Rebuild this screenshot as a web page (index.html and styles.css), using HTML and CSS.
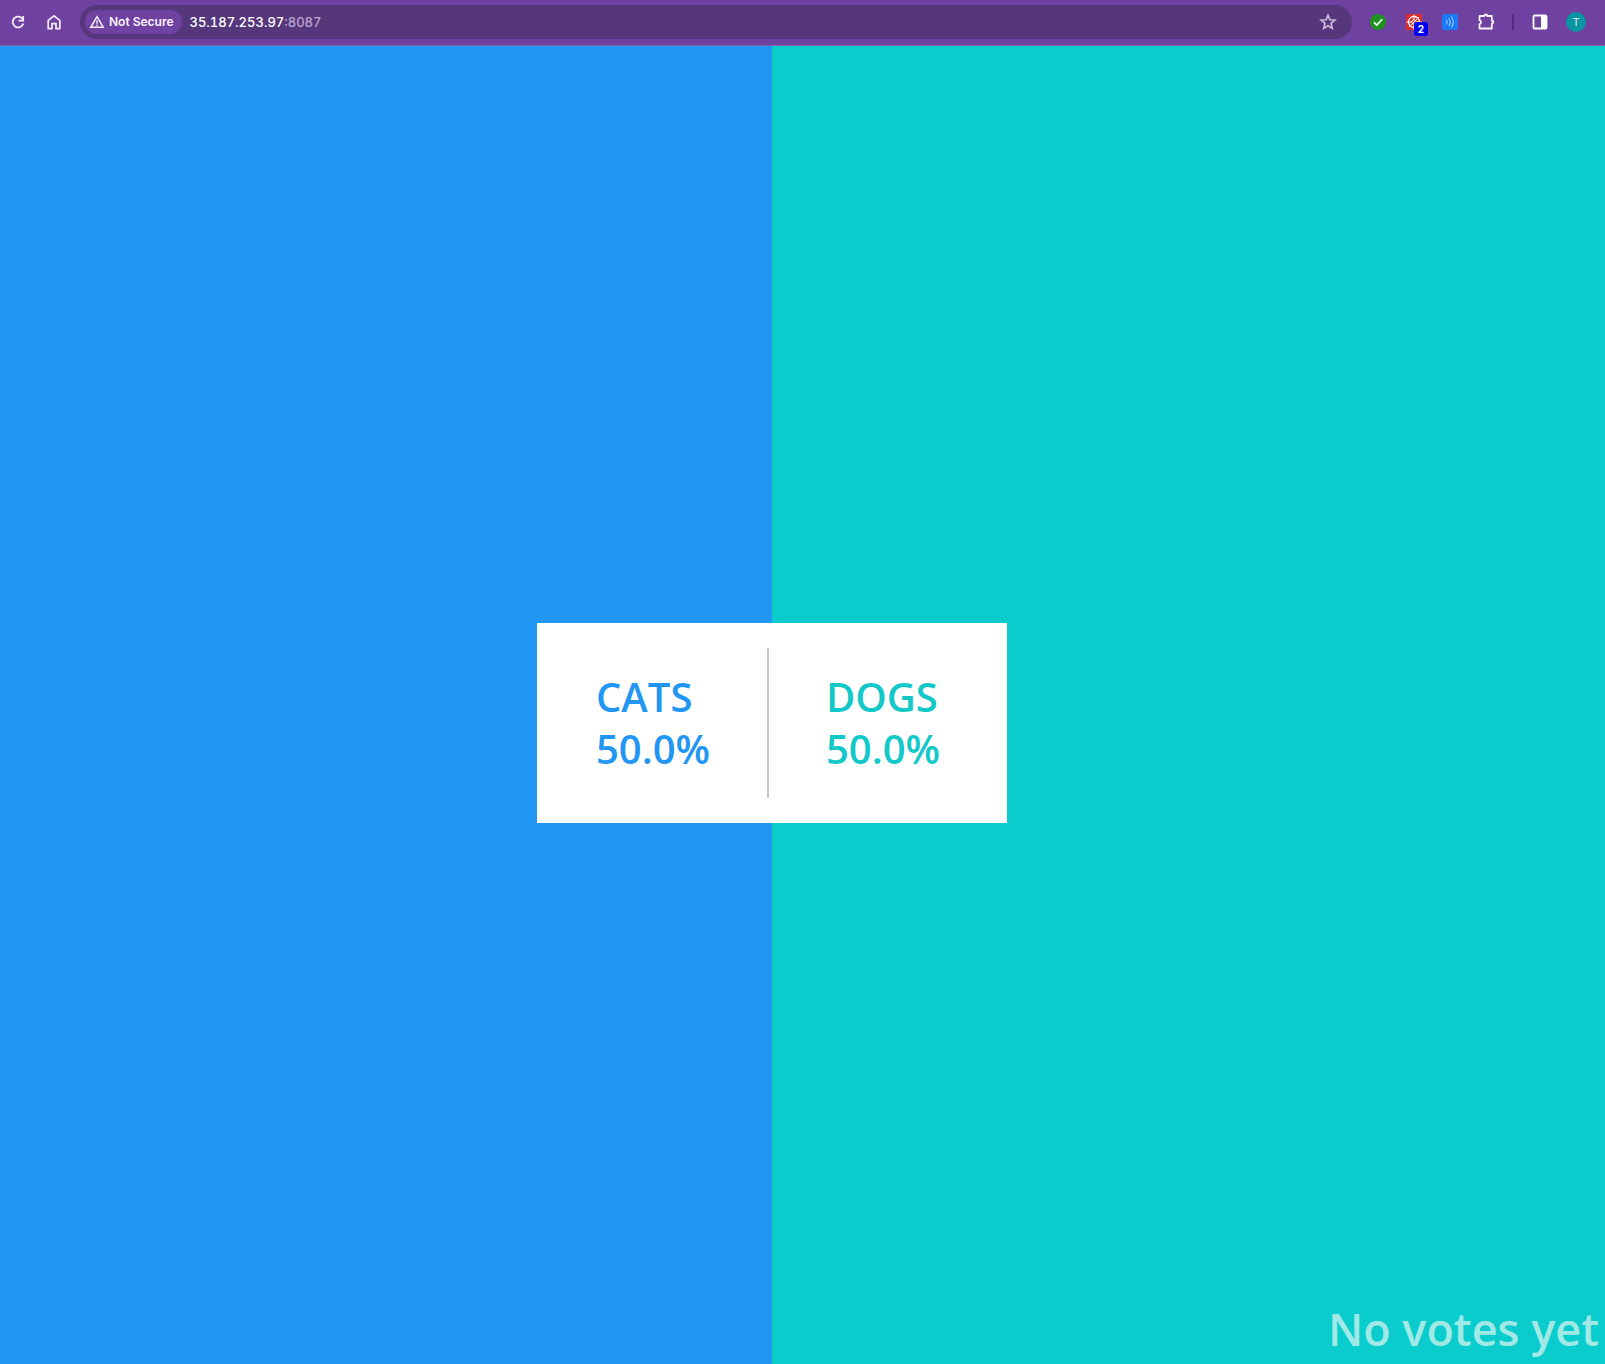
FILE: index.html
```html
<!DOCTYPE html>
<html lang="en">
<head>
<meta charset="utf-8">
<meta name="viewport" content="width=device-width, initial-scale=1">
<title>Cats vs Dogs -- Result</title>
<link rel="stylesheet" href="styles.css">
</head>
<body>
<header class="toolbar">
  <button class="tool" type="button" aria-label="Reload">
    <svg width="18" height="18" viewBox="0 0 18 18" fill="none" stroke="#f6effb" stroke-width="1.800"><path d="M13.8 6.4A5.4 5.4 0 1 0 14.3 10.4"/><path d="M14.2 3v4.6H9.6" /></svg>
  </button>
  <button class="tool" type="button" aria-label="Home">
    <svg width="18" height="18" viewBox="0 0 18 18" fill="none" stroke="#f6effb" stroke-width="1.700"><path d="M3.200 7.3 9 2.8l5.800 4.5v8.300H11v-5H7v5H3.200z"/></svg>
  </button>
  <div class="omnibox">
    <button class="chip" type="button">
      <svg width="16" height="16" viewBox="0 0 16 16" fill="none" stroke="#f6effb"><path d="M8 2.700 14.200 13.300H1.800z" stroke-width="1.500"/><path d="M8 6.200v3.500M8 10.500v1.500" stroke-width="1.400"/></svg>
      <span>Not Secure</span>
    </button>
    <a class="url" href="#"><span class="host">35.187.253.97</span>:8087</a>
    <button class="star" type="button" aria-label="Bookmark this page">
      <svg width="18" height="18" viewBox="0 0 18 18" fill="none" stroke="#c9b8da" stroke-width="1.700"><path d="m9 2.300 1.900 4.500 4.900.4-3.700 3.200 1.100 4.800L9 12.700l-4.200 2.500 1.100-4.800-3.700-3.200 4.900-.4z"/></svg>
    </button>
  </div>
  <div class="extensions">
    <button class="tool" type="button" aria-label="Status checker">
      <svg width="18" height="18" viewBox="0 0 18 18"><circle cx="9" cy="9" r="8" fill="#219321"/><path d="m5 9.300 2.800 2.700 5.400-5.700" fill="none" stroke="#fff" stroke-width="1.600"/></svg>
    </button>
    <button class="tool" type="button" aria-label="Blocker, 2 items">
      <svg width="18" height="18" viewBox="0 0 18 18" fill="none" stroke="#fff"><path d="M1 1h16v16H1z" fill="#e02b2b" stroke="none"/><circle cx="9" cy="9" r="5.500" stroke-width="1.300"/><circle cx="9" cy="9" r="2.200"/><path d="M9 1.500v5M9 11.500v5M1.500 9h5M11.500 9h5M4 14 14 4"/></svg>
      <span class="badge">2</span>
    </button>
    <button class="tool" type="button" aria-label="Read aloud">
      <svg width="18" height="18" viewBox="0 0 18 18" fill="none" stroke="#9ccaff" stroke-width="1.100" stroke-linecap="round"><rect x="1" y="1" width="16" height="16" rx="2" fill="#1b7af8" stroke="none"/><path d="M5.500 7q1.400 2 0 4M8 5.500q2.600 3.500 0 7M10.500 4q3.800 5 0 10"/></svg>
    </button>
    <button class="tool" type="button" aria-label="Extensions">
      <svg width="18" height="18" viewBox="0 0 18 18" fill="none" stroke="#fbf3ff" stroke-width="1.800" stroke-linejoin="round"><path d="M2.500 3h4.800a1.500 1.500 0 0 1 3 0h4.500v4.500a1.500 1.500 0 0 1 0 3v5H2.500v-4.300a2 2 0 0 0 0-3.900z"/></svg>
    </button>
    <span class="separator"></span>
    <button class="tool" type="button" aria-label="Side panel">
      <svg width="18" height="18" viewBox="0 0 18 18"><rect x="2.500" y="2.500" width="13" height="13" rx="1" fill="none" stroke="#fff" stroke-width="1.800"/><path d="M10 2.500h5.500v13H10z" fill="#fff"/></svg>
    </button>
    <button class="tool avatar" type="button" aria-label="Profile">T</button>
  </div>
</header>
<main class="stage">
  <div class="side side-cats"></div>
  <div class="side side-dogs"></div>
  <section class="results" aria-label="Results">
    <div class="choice cats"><span>CATS</span><span>50.0%</span></div>
    <div class="divider"></div>
    <div class="choice dogs"><span>DOGS</span><span>50.0%</span></div>
  </section>
  <p class="total">No votes yet</p>
</main>
</body>
</html>
```

FILE: styles.css
```css
* { box-sizing: border-box; }

body {
  margin: 0;
  min-height: 100vh;
  display: flex;
  flex-direction: column;
  font-family: "Open Sans", sans-serif;
}

button {
  border: 0;
  padding: 0;
  background: none;
  color: inherit;
  font: inherit;
}

svg { display: block; }

.toolbar {
  display: flex;
  align-items: center;
  gap: 16px;
  height: 46px;
  padding: 0 19px 2px 8px;
  background: #6f41a1;
  border-bottom: 1px solid #8263ad;
  font-family: Inter, sans-serif;
}

.tool {
  position: relative;
  display: grid;
  place-items: center;
  width: 20px;
  height: 20px;
}

.omnibox {
  flex: 1;
  display: flex;
  align-items: center;
  height: 34px;
  padding: 0 15px 0 5px;
  border-radius: 17px;
  background: #57377b;
}

.chip {
  display: flex;
  align-items: center;
  gap: 4px;
  height: 24px;
  padding: 0 8px 0 4px;
  border-radius: 12px;
  background: #6f41a1;
  color: #fbf3ff;
  font-size: 12px;
  font-weight: 600;
}

.url {
  flex: 1;
  margin-left: 8px;
  color: #b9a3cf;
  font-size: 13px;
  font-variant-numeric: tabular-nums;
  font-weight: 500;
  text-decoration: none;
}

.host { color: #fff; }

.extensions {
  display: flex;
  align-items: center;
  gap: 16px;
}

.badge {
  position: absolute;
  left: 10px;
  top: 10px;
  width: 14px;
  height: 14px;
  border-radius: 3px;
  background: #0000f5;
  color: #fff;
  font-size: 10px;
  font-weight: 700;
  line-height: 14px;
  text-align: center;
}

.separator {
  width: 2px;
  height: 16px;
  background: #512b79;
}

.avatar {
  border-radius: 50%;
  background: #0b94a3;
  color: #d5f2f4;
  font-size: 11px;
}

.stage {
  position: relative;
  flex: 1;
  display: grid;
  grid-template-columns: 772fr 833fr;
}

.side-cats { background: #2196f3; }
.side-dogs { background: #0bcccc; }

/* The card straddles the line between the two sides. */
.results {
  position: absolute;
  left: 48.1%;
  top: 577px;
  transform: translateX(-50%);
  display: grid;
  grid-template-columns: 230px 2px 1fr;
  align-items: center;
  width: 470px;
  height: 200px;
  background: #fff;
}

.choice {
  display: flex;
  flex-direction: column;
  font-size: 40px;
  font-weight: 600;
  line-height: 52px;
}

.cats { padding-left: 59px; color: #2196f3; }
.dogs { padding-left: 57px; color: #13c8c8; }

.divider {
  height: 150px;
  background: #c5c7c9;
}

.total {
  position: absolute;
  right: 6px;
  bottom: 0;
  margin: 0;
  color: #a0e9e6;
  font-size: 45px;
  font-weight: 600;
  line-height: 70px;
}
```
